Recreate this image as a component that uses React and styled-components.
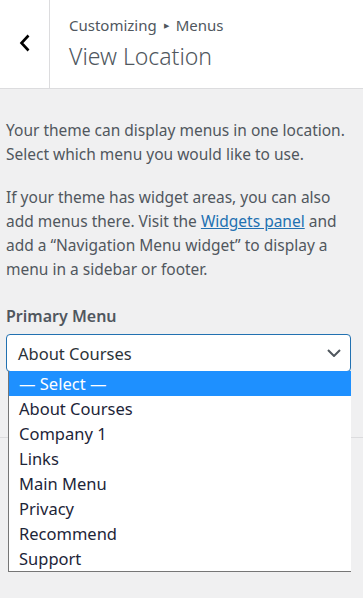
import React from 'react';
import styled, { createGlobalStyle } from 'styled-components';

const GlobalStyle = createGlobalStyle`
  html, body {
    margin: 0;
    padding: 0;
    background: #f0f0f1;
  }
  body {
    font-family: "Noto Sans", "Open Sans", sans-serif;
    color: #50575e;
  }
`;

const Page = styled.div`
  min-height: 598px;
  background: #f0f0f1;
`;

// Panel header: back arrow + breadcrumb title
const Header = styled.header`
  display: flex;
  height: 88px;
  background: #fff;
  border-bottom: 1px solid #dcdcde;
`;

const BackButton = styled.button`
  width: 50px;
  flex: none;
  display: flex;
  align-items: center;
  justify-content: center;
  padding: 0 0 2px 0;
  background: #fff;
  border: 0;
  border-right: 1px solid #dcdcde;
  color: #000;
  cursor: pointer;
`;

const TitleBlock = styled.div`
  display: flex;
  flex-direction: column;
  padding: 13px 0 0 19px;
`;

const Breadcrumb = styled.span`
  font-size: 15px;
  line-height: 24px;
  color: #50575e;
  display: flex;
  align-items: center;
  gap: 7px;
`;

const Arrow = styled.span`
  font-size: 7px;
  line-height: 1;
`;

const Title = styled.h1`
  margin: 4px 0 0;
  font-size: 23px;
  font-weight: 300;
  line-height: 30px;
  color: #50575e;
`;

const Section = styled.section`
  padding: 29px 12px 0 6px;
  height: 319px;
  border-bottom: 1px solid #dcdcde;
  position: relative;
`;

const Description = styled.p`
  margin: 0 0 19px;
  font-size: 15.5px;
  line-height: 24px;
  color: #50575e;
`;

const Link = styled.a`
  color: #2271b1;
  text-decoration: underline;
`;

const Label = styled.div`
  margin-top: 23px;
  font-size: 16px;
  font-weight: 600;
  line-height: 24px;
  color: #50575e;
`;

const SelectBox = styled.div`
  position: relative;
  margin-top: 6px;
  height: 38px;
  box-sizing: border-box;
  border: 1.5px solid #2271b1;
  border-radius: 4px;
  background: #fff;
  display: flex;
  align-items: center;
  justify-content: space-between;
  padding: 0 9px 0 11px;
  font-size: 16.5px;
  color: #2c3338;
`;

const OptionList = styled.ul`
  position: absolute;
  top: 100%;
  left: 1px;
  right: -1px;
  margin: 0;
  padding: 0;
  list-style: none;
  background: #fff;
  border-left: 1px solid #767676;
  border-bottom: 1px solid #767676;
  z-index: 2;
`;

const Option = styled.li`
  height: 25px;
  line-height: 25px;
  padding-left: 10px;
  font-size: 16.5px;
  color: ${({ $active }) => ($active ? '#fff' : '#1d2538')};
  background: ${({ $active }) => ($active ? '#1e90ff' : '#fff')};
`;

const options = [
  '— Select —',
  'About Courses',
  'Company 1',
  'Links',
  'Main Menu',
  'Privacy',
  'Recommend',
  'Support',
];

const App = () => (
  <Page>
    <GlobalStyle />
    <Header>
      <BackButton aria-label="Back">
        <svg width="12" height="18" viewBox="0 0 12 18">
          <path d="M9.5 1.5 L2.5 9 L9.5 16.5" fill="none" stroke="#000" strokeWidth="2.6" />
        </svg>
      </BackButton>
      <TitleBlock>
        <Breadcrumb>
          Customizing <Arrow>▶</Arrow> Menus
        </Breadcrumb>
        <Title>View Location</Title>
      </TitleBlock>
    </Header>
    <Section>
      <Description>
        Your theme can display menus in one location. Select which menu you would like to use.
      </Description>
      <Description>
        If your theme has widget areas, you can also add menus there. Visit the{' '}
        <Link href="#">Widgets panel</Link> and add a “Navigation Menu widget” to display a menu
        in a sidebar or footer.
      </Description>
      <Label>Primary Menu</Label>
      <SelectBox>
        <span>About Courses</span>
        <svg width="14" height="8" viewBox="0 0 14 8">
          <path d="M1 1 L7 7 L13 1" fill="none" stroke="#50575e" strokeWidth="2" />
        </svg>
        <OptionList>
          {options.map((o, i) => (
            <Option key={o} $active={i === 0}>
              {o}
            </Option>
          ))}
        </OptionList>
      </SelectBox>
    </Section>
  </Page>
);

export default App;
